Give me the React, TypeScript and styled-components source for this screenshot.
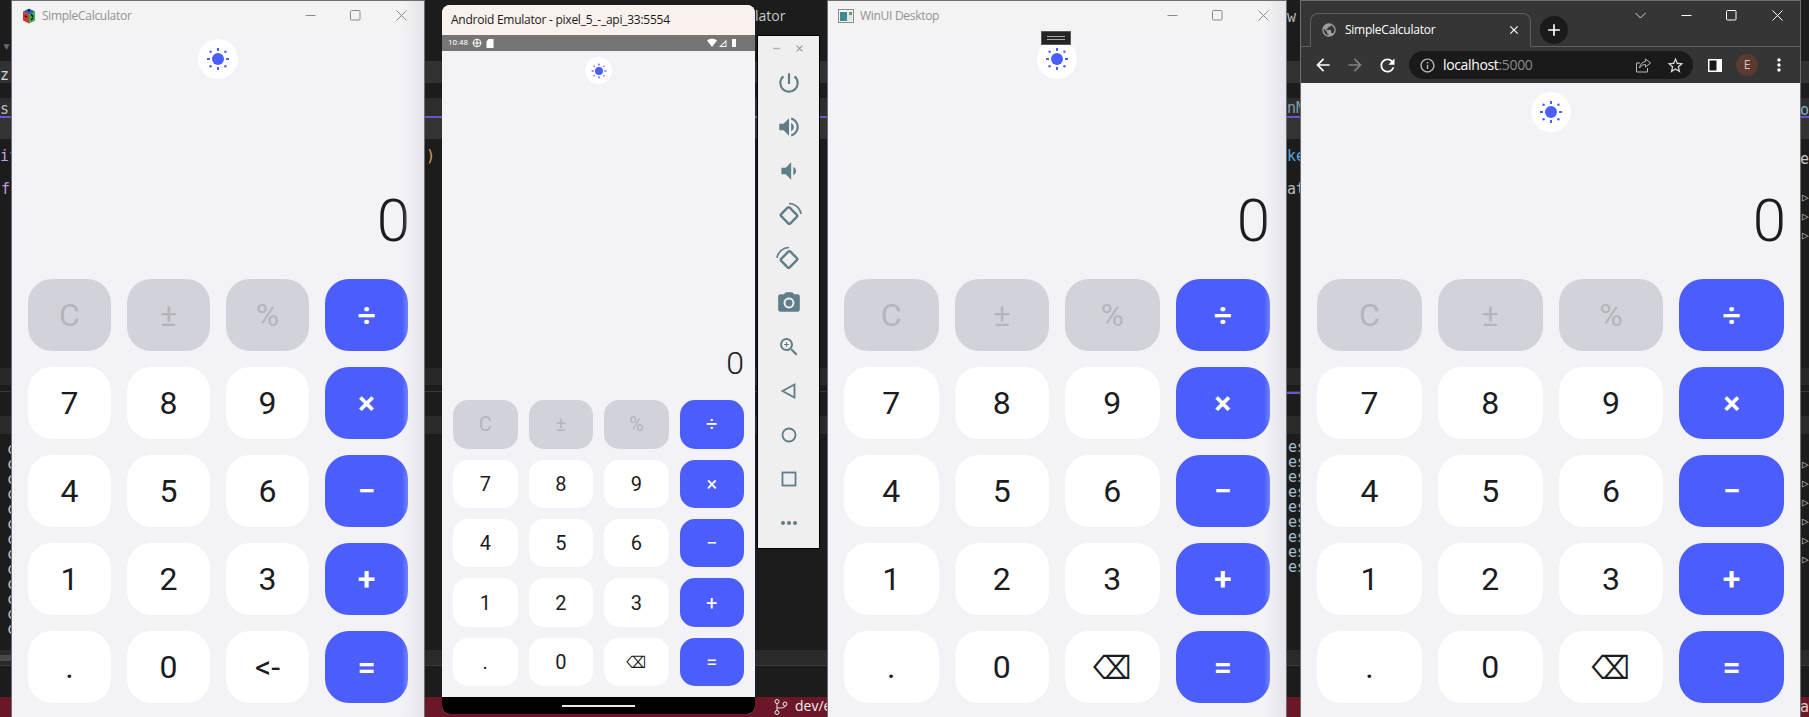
import React from "react";
import styled, { createGlobalStyle } from "styled-components";
import {
  MdAdd,
  MdArrowBack,
  MdArrowForward,
  MdClose,
  MdInfoOutline,
  MdMoreVert,
  MdPhotoCamera,
  MdPowerSettingsNew,
  MdPublic,
  MdRefresh,
  MdStarBorder,
  MdVolumeDown,
  MdVolumeUp,
  MdZoomIn,
} from "react-icons/md";

const BLUE = "#4b5efc";

const GlobalStyle = createGlobalStyle`
  html, body {
    margin: 0;
    padding: 0;
    background: #1c1c1c;
  }
`;

const BANDS = [
  { left: 0, width: 1809, top: 61, height: 22, color: "#313131" },
  { left: 0, width: 1809, top: 98, height: 18, color: "#2d2d2d" },
  { left: 0, width: 1809, top: 116, height: 2, color: "#6a58c8" },
  { left: 0, width: 1809, top: 118, height: 21, color: "#333333" },
  { left: 0, width: 1809, top: 368, height: 17, color: "#282828" },
  { left: 0, width: 1809, top: 391, height: 1, color: "#3a3a3a" },
  { left: 1286, width: 16, top: 392, height: 2, color: "#6a58c8" },
  { left: 0, width: 1809, top: 416, height: 18, color: "#2a2a2a" },
  { left: 0, width: 1809, top: 650, height: 15, color: "#2a2a2a" },
  { left: 0, width: 11, top: 655, height: 6, color: "#4a4a4a" },
  { left: 0, width: 1809, top: 665, height: 1, color: "#3c3c3c" },
  { left: 0, width: 1809, top: 697, height: 20, color: "#6b1728" },
];

const SCRAPS = [
  { x: 0, y: 66, text: "z./", color: "#d8d8d8" },
  { x: 0, y: 100, text: "s", color: "#bdbdbd" },
  { x: 0, y: 147, text: "if", color: "#c79be0" },
  { x: 1, y: 180, text: "f", color: "#c79be0" },
  { x: 426, y: 147, text: ")", color: "#d7a05a" },
  { x: 1287, y: 8, text: "w", color: "#b8b8b8" },
  { x: 1287, y: 99, text: "nM", color: "#7f9fb0" },
  { x: 1287, y: 147, text: "ke", color: "#56a8e0" },
  { x: 1287, y: 180, text: "at", color: "#b8b8b8" },
  { x: 1800, y: 101, text: "o", color: "#7fb0d0" },
  { x: 1800, y: 150, text: "e", color: "#c8c8c8" },
  { x: 1800, y: 698, text: "a", color: "#e0c8cc" },
];

const LEFT_ROWS = Array.from({ length: 13 }, (_, i) => 440 + i * 15);
const RIGHT_ROWS = Array.from({ length: 9 }, (_, i) => 438 + i * 15);
const ARROW_ROWS = [198, 217, 236, 465, 484, 503, 522, 541, 560];

const Desktop = styled.div`
  position: relative;
  display: flex;
  align-items: flex-start;
  width: 1809px;
  height: 717px;
  padding-left: 11px;
  box-sizing: border-box;
  overflow: hidden;
  background: #1c1c1c;
`;

const Band = styled.div<{ $left: number; $width: number; $top: number; $height: number; $color: string }>`
  position: absolute;
  left: ${({ $left }) => $left}px;
  width: ${({ $width }) => $width}px;
  top: ${({ $top }) => $top}px;
  height: ${({ $height }) => $height}px;
  background: ${({ $color }) => $color};
`;

const Scrap = styled.span<{ $x: number; $y: number; $color: string }>`
  position: absolute;
  left: ${({ $x }) => $x}px;
  top: ${({ $y }) => $y}px;
  color: ${({ $color }) => $color};
  font: 15px/18px "DejaVu Sans Mono", monospace;
  white-space: pre;
`;

const LabelScrap = styled(Scrap)`
  font: 14px/18px "Open Sans", sans-serif;
`;

const TriangleScrap = styled(Scrap)`
  font-size: 11px;
`;

const BranchMark = styled.svg`
  position: absolute;
  left: 774px;
  top: 699px;
`;

const AppWindow = styled.section<{ $width: number; $offset: number; $shaded?: boolean }>`
  position: relative;
  z-index: 1;
  flex: none;
  display: flex;
  flex-direction: column;
  box-sizing: border-box;
  width: ${({ $width }) => $width}px;
  height: 717px;
  margin-left: ${({ $offset }) => $offset}px;
  border: 1px solid #6e6e6e;
  border-bottom: 0;
  background: #f2f2f7;

  ${({ $shaded }) =>
    $shaded &&
    `&::after {
      content: "";
      position: absolute;
      top: 0;
      right: 0;
      bottom: 0;
      width: 22px;
      background: linear-gradient(to right, rgba(226, 226, 234, 0), #e4e4ea);
      pointer-events: none;
    }`}
`;

const TitleBar = styled.header`
  flex: none;
  display: flex;
  align-items: center;
  height: 29px;
  padding-left: 10px;
  background: #f3f3f3;
`;

const TitleText = styled.span`
  margin-left: 6px;
  margin-right: auto;
  color: #929292;
  font: 12px/16px "Open Sans", sans-serif;
  letter-spacing: -0.3px;
`;

const CaptionCell = styled.span<{ $color: string }>`
  flex: none;
  display: flex;
  align-items: center;
  justify-content: center;
  width: 45.5px;
  height: 29px;
  color: ${({ $color }) => $color};
`;

const CalcBody = styled.main<{ $compact?: boolean }>`
  flex: 1;
  min-height: 0;
  display: flex;
  flex-direction: column;
  padding: ${({ $compact }) => ($compact ? "6px 11px 11px" : "9px 16px 14px")};
`;

const ThemeToggle = styled.div<{ $compact?: boolean }>`
  flex: none;
  align-self: center;
  display: flex;
  align-items: center;
  justify-content: center;
  width: ${({ $compact }) => ($compact ? 27 : 40)}px;
  height: ${({ $compact }) => ($compact ? 27 : 40)}px;
  border-radius: 50%;
  background: #ffffff;
`;

const Display = styled.div<{ $compact?: boolean; $nudge: number }>`
  flex: 1;
  display: flex;
  align-items: flex-end;
  justify-content: flex-end;
  padding-bottom: ${({ $compact }) => ($compact ? 21 : 28)}px;
  margin-right: ${({ $nudge }) => $nudge}px;
  color: #1b1c1f;
  font: 340 ${({ $compact }) => ($compact ? 32 : 60)}px/1 Roboto, sans-serif;
`;

const Keypad = styled.div<{ $compact?: boolean }>`
  flex: none;
  display: grid;
  grid-template-columns: repeat(4, 1fr);
  grid-auto-rows: ${({ $compact }) => ($compact ? "48.2px" : "72px")};
  gap: ${({ $compact }) => ($compact ? "11.2px 11px" : "16px")};
`;

const KEY_COLORS = {
  muted: { background: "#d2d3da", color: "#b3b4bc" },
  digit: { background: "#ffffff", color: "#1b1c1f" },
  op: { background: BLUE, color: "#ffffff" },
};

const Key = styled.div<{ $kind: keyof typeof KEY_COLORS; $compact?: boolean }>`
  display: flex;
  align-items: center;
  justify-content: center;
  border-radius: ${({ $compact }) => ($compact ? 15 : 24)}px;
  background: ${({ $kind }) => KEY_COLORS[$kind].background};
  color: ${({ $kind }) => KEY_COLORS[$kind].color};
  font-family: Roboto, sans-serif;
  font-size: ${({ $compact }) => ($compact ? 20 : 32)}px;
  font-weight: ${({ $compact, $kind }) => ($compact ? 400 : $kind === "op" ? 600 : 450)};
  line-height: 1;
`;

const BackGlyph = styled.span<{ $size: number }>`
  display: inline-block;
  font-family: "DejaVu Sans", sans-serif;
  font-size: ${({ $size }) => $size}px;
  font-weight: 400;
  line-height: 1;
  transform: scaleY(1.18);
`;

const EmulatorWindow = styled.section`
  position: relative;
  z-index: 1;
  flex: none;
  display: flex;
  flex-direction: column;
  width: 313px;
  height: 709px;
  margin: 5px 0 0 17px;
  border-radius: 8px;
  overflow: hidden;
  background: #f2f2f7;
`;

const EmulatorTitle = styled.header`
  flex: none;
  height: 30px;
  padding-left: 9px;
  background: #f8f1ed;
  color: #1a1a1a;
  font: 12px/30px "Open Sans", sans-serif;
  letter-spacing: -0.25px;
`;

const StatusBar = styled.div`
  flex: none;
  display: flex;
  align-items: center;
  gap: 4px;
  height: 16px;
  padding: 0 18px 0 6px;
  background: #757575;
  color: #ffffff;
  font: 8px/16px Roboto, sans-serif;
`;

const StatusSpacer = styled.span`
  flex: 1;
`;

const NavBar = styled.footer`
  flex: none;
  display: flex;
  align-items: center;
  justify-content: center;
  height: 17px;
  background: #000000;
`;

const HomePill = styled.span`
  width: 73px;
  height: 2px;
  background: #e8e8e8;
`;

const SideToolbar = styled.aside`
  position: relative;
  z-index: 1;
  flex: none;
  display: flex;
  flex-direction: column;
  box-sizing: border-box;
  width: 63px;
  height: 514px;
  margin: 35px 0 0 2px;
  border: 1px solid #000000;
  background: #efefef;
`;

const ToolbarCaption = styled.div`
  flex: none;
  display: flex;
  align-items: center;
  justify-content: space-around;
  height: 25px;
  padding: 0 7px;
  color: #7c939e;
`;

const ToolButton = styled.div`
  flex: none;
  display: flex;
  align-items: center;
  justify-content: center;
  height: 44px;
  color: #607d8b;
`;

const ChromeTop = styled.div`
  flex: none;
  height: 82px;
  background: #353535;
`;

const TabStrip = styled.div`
  display: flex;
  align-items: flex-end;
  height: 46px;
  border-bottom: 1px solid #5f5f5f;
  box-sizing: border-box;
`;

const BrowserTab = styled.div`
  flex: none;
  display: flex;
  align-items: center;
  box-sizing: border-box;
  width: 221px;
  height: 34px;
  margin-left: 9px;
  margin-bottom: -1px;
  padding: 0 9px 0 10px;
  border: 1px solid #5f5f5f;
  border-bottom: 1px solid #353535;
  border-radius: 8px 8px 0 0;
  color: #ffffff;
  font: 12px/16px "Open Sans", sans-serif;
  letter-spacing: -0.25px;
`;

const TabTitle = styled.span`
  flex: 1;
  margin-left: 8px;
`;

const NewTabButton = styled.span`
  flex: none;
  display: flex;
  align-items: center;
  justify-content: center;
  width: 28px;
  height: 28px;
  margin: 0 0 2px 9px;
  border-radius: 50%;
  background: #1a1a1a;
  color: #ffffff;
`;

const TabCaptions = styled.div`
  align-self: flex-start;
  display: flex;
  margin-left: auto;
`;

const ChromeToolbar = styled.div`
  display: flex;
  align-items: center;
  height: 36px;
  padding-left: 6px;
  color: #ffffff;
`;

const NavIcon = styled.span<{ $dim?: boolean }>`
  flex: none;
  display: flex;
  align-items: center;
  justify-content: center;
  width: 32px;
  color: ${({ $dim }) => ($dim ? "#808080" : "#ffffff")};
`;

const Omnibox = styled.div`
  flex: none;
  display: flex;
  align-items: center;
  box-sizing: border-box;
  width: 284px;
  height: 28px;
  margin: 0 6px;
  padding: 0 2px 0 10px;
  border-radius: 14px;
  background: #1a1a1a;
  color: #b8b8b8;
`;

const UrlText = styled.span`
  flex: 1;
  margin-left: 7px;
  color: #ffffff;
  font: 14px/18px "Open Sans", sans-serif;
  letter-spacing: -0.35px;
`;

const UrlPort = styled.span`
  color: #8a8a8a;
`;

const OmniIcon = styled.span`
  flex: none;
  display: flex;
  justify-content: center;
  width: 32px;
`;

const Avatar = styled.span`
  flex: none;
  display: flex;
  align-items: center;
  justify-content: center;
  width: 22px;
  height: 22px;
  margin: 0 11px 0 5px;
  border-radius: 50%;
  background: #5b3a31;
  color: #dcc7bf;
  font: 12px/1 "Open Sans", sans-serif;
`;

const DragHandle = styled.div`
  position: absolute;
  z-index: 2;
  top: 30px;
  left: 213px;
  display: flex;
  flex-direction: column;
  justify-content: center;
  gap: 2px;
  box-sizing: border-box;
  width: 30px;
  height: 14px;
  padding: 0 5px;
  border: 1px solid #5a5a5a;
  background: #252525;
`;

const DragLine = styled.span`
  height: 1px;
  background: #a8a8a8;
`;

const SunIcon = ({ size }: { size: number }) => (
  <svg width={size} height={size} viewBox="0 0 24 24" fill={BLUE} aria-hidden="true">
    <circle cx="12" cy="12" r="6" />
    <rect x="11" y="1" width="2" height="3" />
    <rect x="11" y="20" width="2" height="3" />
    <rect x="1" y="11" width="3" height="2" />
    <rect x="20" y="11" width="3" height="2" />
    <circle cx="4.6" cy="4.8" r="1.2" />
    <circle cx="19.4" cy="4.8" r="1.2" />
    <circle cx="4.6" cy="19.2" r="1.2" />
    <circle cx="19.4" cy="19.2" r="1.2" />
  </svg>
);

const CubeLogo = () => (
  <svg width="14" height="16" viewBox="0 0 14 16" aria-hidden="true">
    <path d="M7 0.5 13 3.5 7 7 1 3.5Z" fill="#2f5fa8" />
    <path d="M1 3.5 7 7V15.5L1 12.5Z" fill="#d8352c" />
    <path d="M13 3.5 7 7V15.5L13 12.5Z" fill="#35b34a" />
    <path d="M3 8 5 9M9 6 11 9M9 12 11 10M6 2 8 3" stroke="#161616" strokeWidth="1.5" fill="none" />
  </svg>
);

const WinUiLogo = () => (
  <svg width="16" height="14" viewBox="0 0 16 14" aria-hidden="true">
    <rect x="0.5" y="0.5" width="15" height="13" fill="#f2f2f2" stroke="#8a8a8a" />
    <rect x="2" y="3" width="7" height="9" fill="#3d8a8f" />
    <rect x="9" y="3" width="5" height="9" fill="#dfe6e8" />
    <rect x="11" y="3" width="3" height="3" fill="#5fa07a" />
  </svg>
);

const CaptionButtons = ({ color }: { color: string }) => (
  <>
    <CaptionCell $color={color}>
      <svg width="11" height="11" viewBox="0 0 11 11" aria-hidden="true">
        <path d="M0.5 5.5H10.5" stroke="currentColor" fill="none" />
      </svg>
    </CaptionCell>
    <CaptionCell $color={color}>
      <svg width="11" height="11" viewBox="0 0 11 11" aria-hidden="true">
        <rect x="0.5" y="0.5" width="9.5" height="9.5" rx="1" stroke="currentColor" fill="none" />
      </svg>
    </CaptionCell>
    <CaptionCell $color={color}>
      <svg width="11" height="11" viewBox="0 0 11 11" aria-hidden="true">
        <path d="M0.5 0.5 10.5 10.5M10.5 0.5 0.5 10.5" stroke="currentColor" fill="none" />
      </svg>
    </CaptionCell>
  </>
);

const RotateIcon = ({ flip }: { flip?: boolean }) => (
  <svg width="26" height="26" viewBox="0 0 26 26" fill="none" stroke="currentColor" aria-hidden="true">
    <g transform={flip ? "matrix(-1 0 0 1 26 0)" : undefined}>
      <rect x="6.5" y="7.5" width="13" height="12" rx="1.5" strokeWidth="2.4" transform="rotate(45 13 13.5)" />
      <path d="M13 1.5C19 1.5 24.5 6.5 25 12" strokeWidth="1.6" />
    </g>
  </svg>
);

const ShareIcon = () => (
  <svg width="17" height="15" viewBox="0 0 17 15" fill="none" stroke="currentColor" aria-hidden="true">
    <path d="M5 5H1.5V14H12.5V10" />
    <path d="M10.5 1 15.5 5 10.5 9V6.5C8 6.5 6 7.5 4.5 10 5 6.5 7 4 10.5 3.5Z" />
  </svg>
);

const SidePanelIcon = () => (
  <svg width="14" height="13" viewBox="0 0 14 13" aria-hidden="true">
    <rect width="14" height="13" fill="#ffffff" />
    <rect x="1.5" y="1.5" width="7" height="10" fill="#1a1a1a" />
  </svg>
);

const LABELS = [
  ["C", "±", "%", "÷"],
  ["7", "8", "9", "×"],
  ["4", "5", "6", "−"],
  ["1", "2", "3", "+"],
];

const kindOf = (row: number, col: number): keyof typeof KEY_COLORS => {
  if (col === 3) return "op";
  return row === 0 ? "muted" : "digit";
};

const Calculator = ({
  compact,
  backKey,
  nudge = 0,
}: {
  compact?: boolean;
  backKey: React.ReactNode;
  nudge?: number;
}) => (
  <CalcBody $compact={compact}>
    <ThemeToggle $compact={compact}>
      <SunIcon size={compact ? 16 : 24} />
    </ThemeToggle>
    <Display $compact={compact} $nudge={nudge}>0</Display>
    <Keypad $compact={compact}>
      {LABELS.map((row, r) =>
        row.map((label, c) => (
          <Key key={label} $kind={kindOf(r, c)} $compact={compact}>
            {label}
          </Key>
        ))
      )}
      <Key $kind="digit" $compact={compact}>.</Key>
      <Key $kind="digit" $compact={compact}>0</Key>
      <Key $kind="digit" $compact={compact}>{backKey}</Key>
      <Key $kind="op" $compact={compact}>=</Key>
    </Keypad>
  </CalcBody>
);

const App: React.FC = () => (
  <Desktop>
    <GlobalStyle />
    {BANDS.map((b) => (
      <Band
        key={`${b.left}-${b.top}`}
        $left={b.left}
        $width={b.width}
        $top={b.top}
        $height={b.height}
        $color={b.color}
      />
    ))}
    {SCRAPS.map((s) => (
      <Scrap key={`${s.x}-${s.y}`} $x={s.x} $y={s.y} $color={s.color}>
        {s.text}
      </Scrap>
    ))}
    {LEFT_ROWS.map((y) => (
      <Scrap key={y} $x={7} $y={y} $color="#b9c8d4">c</Scrap>
    ))}
    {RIGHT_ROWS.map((y) => (
      <Scrap key={y} $x={1288} $y={y} $color="#a8bccc">es</Scrap>
    ))}
    {ARROW_ROWS.map((y) => (
      <TriangleScrap key={y} $x={1802} $y={y - 9} $color="#b8b8b8">▷</TriangleScrap>
    ))}
    <Scrap $x={2} $y={37} $color="#6a6a6a">▾</Scrap>
    <LabelScrap $x={755} $y={7} $color="#c8c8c8">lator</LabelScrap>
    <LabelScrap $x={795} $y={697} $color="#eeeeee">dev/e</LabelScrap>
    <BranchMark width="14" height="16" viewBox="0 0 14 16" fill="none" stroke="#eeeeee" aria-hidden="true">
      <circle cx="3" cy="2.5" r="2" />
      <circle cx="3" cy="13.5" r="2" />
      <circle cx="11" cy="5" r="2" />
      <path d="M3 4.5V11.5M3 9C8 9 11 9 11 7" />
    </BranchMark>

    <AppWindow $width={414} $offset={0} $shaded>
      <TitleBar>
        <CubeLogo />
        <TitleText>SimpleCalculator</TitleText>
        <CaptionButtons color="#8a8a8a" />
      </TitleBar>
      <Calculator backKey="<-" nudge={-2} />
    </AppWindow>

    <EmulatorWindow>
      <EmulatorTitle>Android Emulator - pixel_5_-_api_33:5554</EmulatorTitle>
      <StatusBar>
        <span>10:48</span>
        <svg width="10" height="10" viewBox="0 0 10 10" fill="none" stroke="#ffffff" aria-hidden="true">
          <circle cx="5" cy="5" r="3.8" />
          <path d="M0.5 5H9.5M5 1V9" />
        </svg>
        <svg width="8" height="9" viewBox="0 0 8 9" fill="#ffffff" aria-hidden="true">
          <path d="M2.5 0H7.5V9H0.5V2.5Z" />
        </svg>
        <StatusSpacer />
        <svg width="30" height="10" viewBox="0 0 30 10" fill="#ffffff" aria-hidden="true">
          <path d="M0 2.5C3 0 7 0 10 2.5L5 9Z" />
          <path d="M19.5 1.5V9H12ZM18.5 4 14.5 8H18.5Z" fillRule="evenodd" />
          <path d="M25 1H29V9H25Z" />
        </svg>
      </StatusBar>
      <Calculator compact backKey={<BackGlyph $size={14}>⌫</BackGlyph>} />
      <NavBar>
        <HomePill />
      </NavBar>
    </EmulatorWindow>

    <SideToolbar>
      <ToolbarCaption>
        <svg width="9" height="9" viewBox="0 0 9 9" aria-hidden="true">
          <path d="M1 4.5H8" stroke="#a9b8bf" strokeWidth="1.4" />
        </svg>
        <MdClose size={11} />
      </ToolbarCaption>
      <ToolButton><MdPowerSettingsNew size={26} /></ToolButton>
      <ToolButton><MdVolumeUp size={26} /></ToolButton>
      <ToolButton><MdVolumeDown size={26} /></ToolButton>
      <ToolButton><RotateIcon /></ToolButton>
      <ToolButton><RotateIcon flip /></ToolButton>
      <ToolButton><MdPhotoCamera size={26} /></ToolButton>
      <ToolButton><MdZoomIn size={24} /></ToolButton>
      <ToolButton>
        <svg width="20" height="20" viewBox="0 0 20 20" fill="none" stroke="currentColor" strokeWidth="1.8" aria-hidden="true">
          <path d="M15.5 3.5V16.5L3.5 10Z" />
        </svg>
      </ToolButton>
      <ToolButton>
        <svg width="20" height="20" viewBox="0 0 20 20" fill="none" stroke="currentColor" strokeWidth="1.8" aria-hidden="true">
          <circle cx="10" cy="10" r="6.5" />
        </svg>
      </ToolButton>
      <ToolButton>
        <svg width="20" height="20" viewBox="0 0 20 20" fill="none" stroke="currentColor" strokeWidth="1.8" aria-hidden="true">
          <rect x="3.5" y="3.5" width="13" height="13" />
        </svg>
      </ToolButton>
      <ToolButton>
        <svg width="20" height="6" viewBox="0 0 20 6" fill="currentColor" aria-hidden="true">
          <circle cx="4" cy="3" r="2" />
          <circle cx="10" cy="3" r="2" />
          <circle cx="16" cy="3" r="2" />
        </svg>
      </ToolButton>
    </SideToolbar>

    <AppWindow $width={460} $offset={7} $shaded>
      <TitleBar>
        <WinUiLogo />
        <TitleText>WinUI Desktop</TitleText>
        <CaptionButtons color="#8a8a8a" />
      </TitleBar>
      <DragHandle>
        <DragLine />
        <DragLine />
      </DragHandle>
      <Calculator backKey={<BackGlyph $size={27}>⌫</BackGlyph>} />
    </AppWindow>

    <AppWindow $width={501} $offset={13}>
      <ChromeTop>
        <TabStrip>
          <BrowserTab>
            <MdPublic size={16} color="#9aa0a6" />
            <TabTitle>SimpleCalculator</TabTitle>
            <MdClose size={14} />
          </BrowserTab>
          <NewTabButton>
            <MdAdd size={20} />
          </NewTabButton>
          <TabCaptions>
            <CaptionCell $color="#d8d8d8">
              <svg width="11" height="7" viewBox="0 0 11 7" aria-hidden="true">
                <path d="M0.5 1 5.5 6 10.5 1" stroke="currentColor" fill="none" />
              </svg>
            </CaptionCell>
            <CaptionButtons color="#ffffff" />
          </TabCaptions>
        </TabStrip>
        <ChromeToolbar>
          <NavIcon><MdArrowBack size={20} /></NavIcon>
          <NavIcon $dim><MdArrowForward size={20} /></NavIcon>
          <NavIcon><MdRefresh size={21} /></NavIcon>
          <Omnibox>
            <MdInfoOutline size={17} />
            <UrlText>
              localhost<UrlPort>:5000</UrlPort>
            </UrlText>
            <OmniIcon><ShareIcon /></OmniIcon>
            <OmniIcon><MdStarBorder size={19} color="#d8d8d8" /></OmniIcon>
          </Omnibox>
          <NavIcon><SidePanelIcon /></NavIcon>
          <Avatar>E</Avatar>
          <MdMoreVert size={20} />
        </ChromeToolbar>
      </ChromeTop>
      <Calculator backKey={<BackGlyph $size={27}>⌫</BackGlyph>} nudge={-2} />
    </AppWindow>
  </Desktop>
);

export default App;
